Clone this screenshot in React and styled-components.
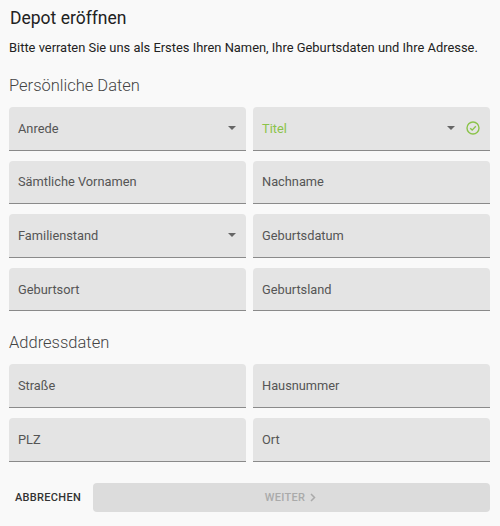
import React from 'react';
import styled, { createGlobalStyle } from 'styled-components';

const Global = createGlobalStyle`
  body {
    margin: 0;
    background: #f9f9f9;
    font-family: Roboto, "Liberation Sans", sans-serif;
  }
`;

const Page = styled.div`
  width: 500px;
  height: 526px;
  box-sizing: border-box;
  padding: 6px 10px 0 9px;
  background: #f9f9f9;
`;

const Heading = styled.h1`
  margin: 0 0 0 1px;
  font-size: 17.5px;
  font-weight: 400;
  color: #222;
  line-height: 24px;
`;

const Intro = styled.p`
  margin: 10px 0 0 0;
  font-size: 12.9px;
  color: #222;
  line-height: 16px;
`;

const Section = styled.h2`
  margin: ${(p) => p.$top}px 0 ${(p) => p.$bottom}px 0;
  font-size: 16.5px;
  font-weight: 300;
  color: #444;
  line-height: 20px;
`;

const Grid = styled.div`
  display: grid;
  grid-template-columns: 1fr 1fr;
  column-gap: 7px;
  row-gap: 10px;
`;

const Field = styled.div`
  height: 43.6px;
  box-sizing: border-box;
  display: flex;
  align-items: center;
  padding: 0 10px 0 9px;
  background: #e4e4e4;
  border-radius: 4px 4px 0 0;
  border-bottom: 1px solid #8a8a8a;
  font-size: 12.8px;
  color: ${(p) => (p.$valid ? '#8bc34a' : '#555')};
`;

const Label = styled.span`
  flex: 1;
`;

const Caret = styled.span`
  width: 0;
  height: 0;
  border-left: 4px solid transparent;
  border-right: 4px solid transparent;
  border-top: 4px solid #666;
  margin-right: ${(p) => (p.$withIcon ? '11px' : '0')};
`;

const Footer = styled.div`
  display: flex;
  align-items: center;
  margin-top: 21px;
  gap: 6px;
`;

const Cancel = styled.button`
  background: none;
  border: none;
  padding: 0 6px;
  font-family: inherit;
  font-size: 11px;
  font-weight: 500;
  letter-spacing: 0.3px;
  color: #333;
`;

const Next = styled.button`
  flex: 1;
  height: 29px;
  background: #dcdcdc;
  border: none;
  border-radius: 4px;
  font-family: inherit;
  font-size: 11px;
  font-weight: 500;
  letter-spacing: 0.3px;
  color: #aaa;
  display: flex;
  align-items: center;
  justify-content: center;
  gap: 5px;
  padding-right: 8px;
`;

function Check() {
  return (
    <svg width="14" height="14" viewBox="0 0 14 14" fill="none" stroke="#8bc34a" strokeWidth="1.4">
      <circle cx="7" cy="7" r="6" />
      <path d="M4.2 7.2 L6.2 9.1 L9.8 5.2" />
    </svg>
  );
}

function Input({ label, select, valid }) {
  return (
    <Field $valid={valid}>
      <Label>{label}</Label>
      {select && <Caret $withIcon={valid} />}
      {valid && <Check />}
    </Field>
  );
}

export default function App() {
  return (
    <Page>
      <Global />
      <Heading>Depot eröffnen</Heading>
      <Intro>Bitte verraten Sie uns als Erstes Ihren Namen, Ihre Geburtsdaten und Ihre Adresse.</Intro>
      <Section $top={20} $bottom={11}>Persönliche Daten</Section>
      <Grid>
        <Input label="Anrede" select />
        <Input label="Titel" select valid />
        <Input label="Sämtliche Vornamen" />
        <Input label="Nachname" />
        <Input label="Familienstand" select />
        <Input label="Geburtsdatum" />
        <Input label="Geburtsort" />
        <Input label="Geburtsland" />
      </Grid>
      <Section $top={22} $bottom={11}>Addressdaten</Section>
      <Grid>
        <Input label="Straße" />
        <Input label="Hausnummer" />
        <Input label="PLZ" />
        <Input label="Ort" />
      </Grid>
      <Footer>
        <Cancel>ABBRECHEN</Cancel>
        <Next>
          WEITER
          <svg width="6" height="9" viewBox="0 0 6 9" fill="none" stroke="#aaa" strokeWidth="1.5">
            <path d="M1 1 L4.5 4.5 L1 8" />
          </svg>
        </Next>
      </Footer>
    </Page>
  );
}
